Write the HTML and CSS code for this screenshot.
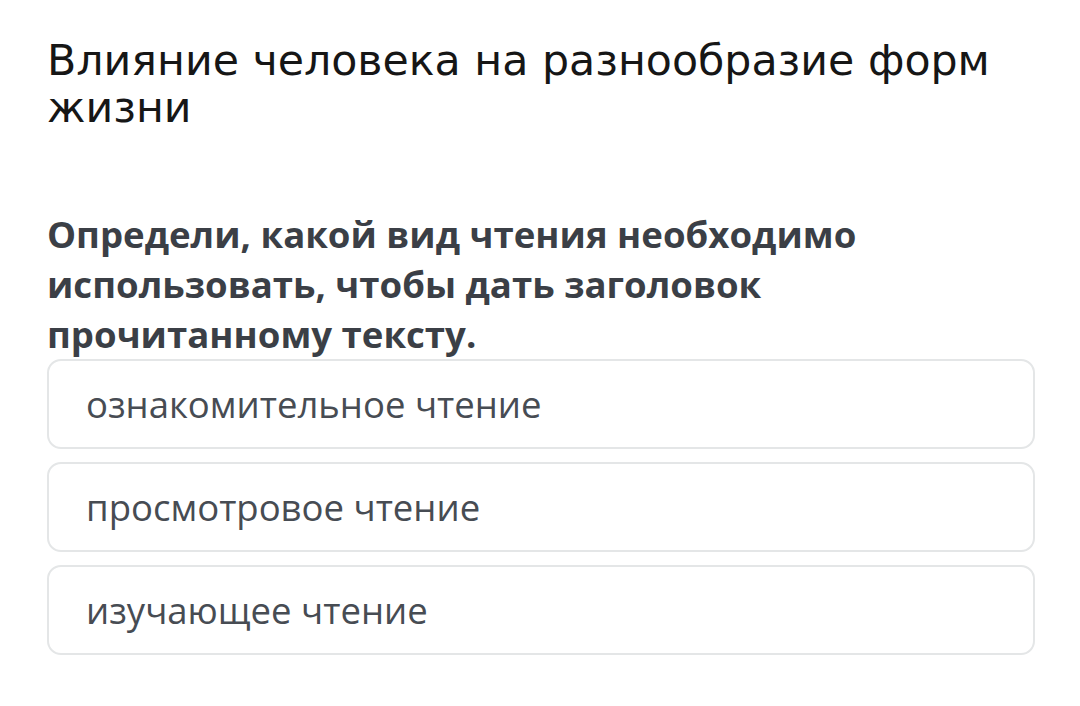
FILE: index.html
```html
<!DOCTYPE html>
<html lang="ru">
<head>
<meta charset="utf-8">
<link rel="stylesheet" href="styles.css">
</head>
<body>
<main class="page">
  <h1 class="title">Влияние человека на разнообразие форм жизни</h1>
  <p class="question">Определи, какой вид чтения необходимо использовать, чтобы дать заголовок прочитанному тексту.</p>
  <div class="options">
    <div class="option">ознакомительное чтение</div>
    <div class="option">просмотровое чтение</div>
    <div class="option">изучающее чтение</div>
  </div>
</main>
</body>
</html>
```
FILE: styles.css
```css
html, body {
  margin: 0;
  padding: 0;
  background: #ffffff;
}
.page {
  padding: 37px 45px 0 47px;
}
.title {
  margin: 0;
  font-family: "DejaVu Sans", sans-serif;
  font-weight: normal;
  font-size: 42.7px;
  line-height: 47px;
  color: #161616;
}
.question {
  margin: 78px 0 0 0;
  font-family: "Open Sans", sans-serif;
  font-weight: bold;
  font-size: 36.6px;
  line-height: 50px;
  color: #3b3f46;
  width: 900px;
}
.options {
  margin-top: 0;
  display: flex;
  flex-direction: column;
  gap: 13px;
}
.option {
  height: 90px;
  box-sizing: border-box;
  border: 2px solid #e4e6e7;
  border-radius: 14px;
  padding: 0 37px;
  display: flex;
  align-items: center;
  font-family: "Open Sans", sans-serif;
  font-size: 36.5px;
  color: #474c53;
}
```
